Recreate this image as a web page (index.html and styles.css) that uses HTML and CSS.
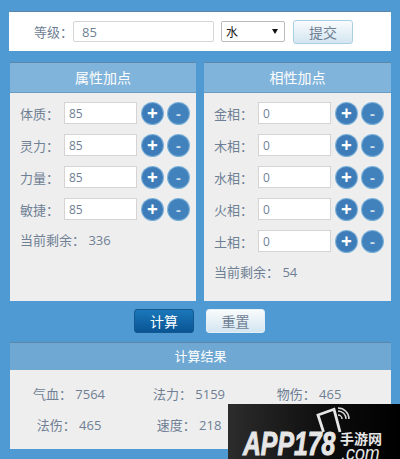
FILE: index.html
```html
<!DOCTYPE html>
<html lang="zh">
<head>
<meta charset="utf-8">
<title>加点模拟器</title>
<link rel="stylesheet" href="styles.css">
</head>
<body>
<div class="page">
  <form class="level-bar">
    <label class="level-label">等级：</label>
    <input class="level-input" type="text" value="85">
    <div class="fake-select"><span>水</span><i class="caret"></i></div>
    <button type="button" class="btn btn-light btn-submit">提交</button>
  </form>

  <div class="columns">
    <section class="panel">
      <h2 class="panel-title">属性加点</h2>
      <div class="panel-body">
        <div class="row"><label>体质：</label><input type="text" value="85"><span class="round">+</span><span class="round minus">-</span></div>
        <div class="row"><label>灵力：</label><input type="text" value="85"><span class="round">+</span><span class="round minus">-</span></div>
        <div class="row"><label>力量：</label><input type="text" value="85"><span class="round">+</span><span class="round minus">-</span></div>
        <div class="row"><label>敏捷：</label><input type="text" value="85"><span class="round">+</span><span class="round minus">-</span></div>
        <p class="remain">当前剩余： 336</p>
      </div>
    </section>
    <section class="panel">
      <h2 class="panel-title">相性加点</h2>
      <div class="panel-body">
        <div class="row"><label>金相：</label><input type="text" value="0"><span class="round">+</span><span class="round minus">-</span></div>
        <div class="row"><label>木相：</label><input type="text" value="0"><span class="round">+</span><span class="round minus">-</span></div>
        <div class="row"><label>水相：</label><input type="text" value="0"><span class="round">+</span><span class="round minus">-</span></div>
        <div class="row"><label>火相：</label><input type="text" value="0"><span class="round">+</span><span class="round minus">-</span></div>
        <div class="row"><label>土相：</label><input type="text" value="0"><span class="round">+</span><span class="round minus">-</span></div>
        <p class="remain">当前剩余： 54</p>
      </div>
    </section>
  </div>

  <div class="actions">
    <button type="button" class="btn btn-dark">计算</button>
    <button type="button" class="btn btn-light btn-reset">重置</button>
  </div>

  <section class="panel result">
    <h2 class="panel-title result-title">计算结果</h2>
    <div class="result-grid">
      <span>气血： 7564</span>
      <span>法力： 5159</span>
      <span>物伤： 465</span>
      <span>法伤： 465</span>
      <span>速度： 218</span>
    </div>
  </section>
</div>

<div class="logo">
  <svg class="logo-phone" width="36" height="28" viewBox="0 0 36 28" aria-hidden="true">
    <path d="M7.500 26 L2 9 L18 3.300 L24 26" fill="none" stroke="#e6e6e6" stroke-width="2.800"/>
    <path d="M22 9 a4 4 0 0 1 4 4 M22 5 a8 8 0 0 1 8 8 M22 2 a11 11 0 0 1 11 11" fill="none" stroke="#d8d8d8" stroke-width="1.500"/>
  </svg>
  <span class="logo-main">APP178</span>
  <span class="logo-cn">手游网</span>
  <span class="logo-com">.com</span>
</div>
</body>
</html>
```
FILE: styles.css
```css
* { box-sizing: border-box; }
html, body { margin: 0; padding: 0; }
body {
  width: 400px;
  height: 459px;
  overflow: hidden;
  position: relative;
  background: #4f9ad2;
  font-family: "Open Sans", "Noto Sans CJK SC", sans-serif;
  font-size: 13px;
  color: #6f7f94;
}
.page { padding: 11px 9px 0 10px; }

.level-bar {
  height: 40px;
  margin-left: -1px;
  background: #fff;
  border-top: 1px solid #5d87a8;
  display: flex;
  align-items: center;
  padding-left: 25px;
}
.level-label { width: 39px; }
.level-input {
  width: 141px;
  height: 21px;
  margin-right: 7px;
  padding: 0 0 0 8px;
  border: 1px solid #d6d6d6;
  border-radius: 2px;
  font: inherit;
  color: #6f7f94;
  background: #fff;
}
.fake-select {
  width: 64px;
  height: 21px;
  margin-right: 8px;
  border: 1px solid #bbb;
  border-radius: 2px;
  color: #222;
  font-size: 12px;
  display: flex;
  align-items: center;
  justify-content: space-between;
  padding: 0 6px 0 4px;
}
.caret {
  width: 0;
  height: 0;
  border-left: 3px solid transparent;
  border-right: 3px solid transparent;
  border-top: 5px solid #111;
}
.btn {
  font: inherit;
  font-size: 14px;
  height: 24px;
  padding: 0;
  border-radius: 3px;
  cursor: pointer;
}
.btn-light {
  background: linear-gradient(#f9fbfc, #d3e6f1);
  border: 1px solid #a9cfe4;
  color: #6f7f94;
}
.btn-submit { width: 60px; }
.btn-dark {
  width: 60px;
  background: linear-gradient(#1a78ba, #0a5494);
  border: 1px solid #13588e;
  color: #fff;
}
.btn-reset { width: 59px; border-color: #e4eff6; }

.columns {
  display: flex;
  gap: 8px;
  margin-top: 11px;
}
.panel {
  background: #eeeeee;
  border-top: 1px solid #5d87a8;
}
.columns .panel { width: 186px; height: 239px; }
.columns .panel + .panel { width: 187px; }
.panel-title {
  margin: 0;
  height: 30px;
  line-height: 30px;
  text-align: center;
  font-size: 14px;
  font-weight: 400;
  color: #fff;
  background: #81b4da;
  border-bottom: 1px solid #6a9cc3;
}
.panel-body { padding: 9px 0 0 10px; }
.row {
  display: flex;
  align-items: center;
  height: 22px;
  margin-bottom: 10px;
}
.row label { width: 44px; }
.row input {
  width: 73px;
  height: 22px;
  margin-right: 5px;
  padding: 0 0 0 4px;
  border: 1px solid #d4d4d4;
  font: inherit;
  font-size: 12px;
  color: #6f7f94;
  background: #fff;
}
.round {
  width: 21px;
  height: 21px;
  margin-right: 5px;
  border-radius: 50%;
  background: #3d7cb8;
  box-shadow: 0 0 0 1px #7ab0d8;
  color: #fff;
  font-size: 19px;
  font-weight: 700;
  line-height: 20px;
  text-align: center;
}
.round.minus { background: #4282bc; color: #cfe0ee; font-size: 15px; }
.remain { margin: 0; line-height: 20px; }

.actions {
  display: flex;
  justify-content: center;
  gap: 12px;
  height: 24px;
  margin: 8px 2px 9px 0;
}

.result { height: 107px; }
.result-title {
  height: 27px;
  line-height: 27px;
  font-size: 13px;
  background: #6fa8d2;
  border-bottom: none;
}
.result-grid {
  display: grid;
  grid-template-columns: repeat(3, 120px);
  row-gap: 11px;
  padding-top: 14px;
  margin-left: -1px;
  text-align: center;
  line-height: 20px;
}

.logo {
  position: absolute;
  left: 228px;
  top: 404px;
  width: 172px;
  height: 55px;
  background: linear-gradient(90deg, #2c2c2c, #0c0c0c 60%, #000);
  color: #e6e6e6;
}
.logo-phone { position: absolute; left: 88px; top: 2px; }
.logo-main {
  position: absolute;
  left: 15px;
  top: 25px;
  font-family: "Liberation Sans", sans-serif;
  font-size: 33px;
  line-height: 30px;
  font-weight: 700;
  font-style: italic;
  -webkit-text-stroke: 1px #e6e6e6;
  transform: scaleX(.75);
  transform-origin: left;
}
.logo-cn {
  position: absolute;
  left: 112px;
  top: 28px;
  width: 42px;
  font-size: 14px;
  font-weight: 700;
  line-height: 12px;
  font-family: "Noto Sans CJK SC", sans-serif;
}
.logo-com {
  position: absolute;
  left: 113px;
  top: 42px;
  font-size: 21px;
  line-height: 13px;
  font-style: italic;
  font-family: "Liberation Sans", sans-serif;
  transform: scaleX(.85);
  transform-origin: left;
}
```
